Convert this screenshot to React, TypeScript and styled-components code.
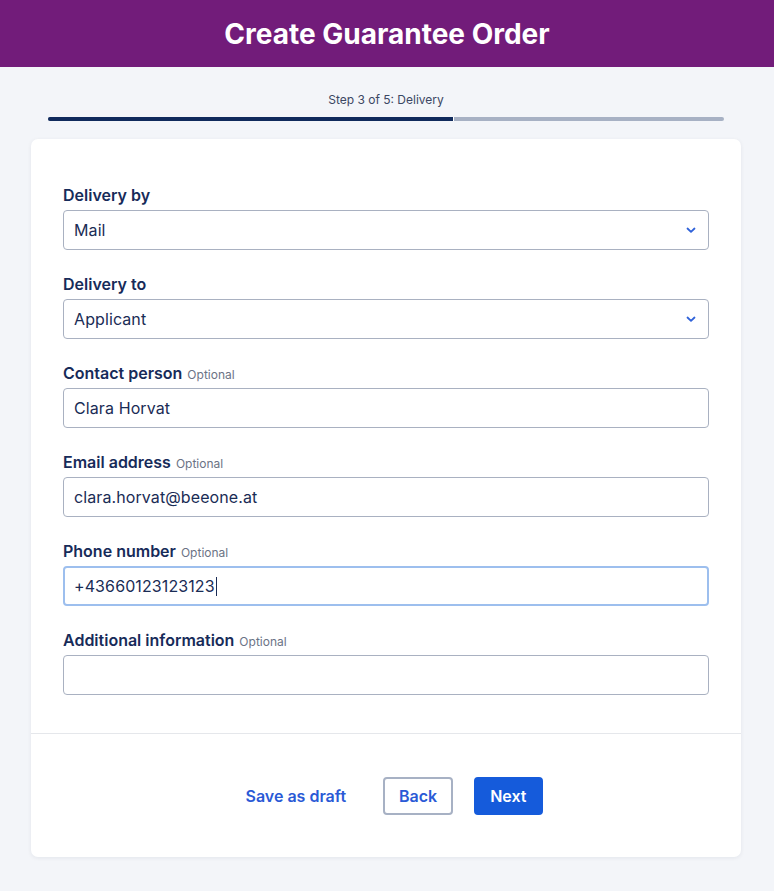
import React from "react";
import styled, { createGlobalStyle } from "styled-components";

const GlobalStyle = createGlobalStyle`
  * { box-sizing: border-box; }
  body {
    margin: 0;
    background: #f3f5f9;
    font-family: Inter, "Noto Sans", "Liberation Sans", sans-serif;
    color: #172b59;
  }
`;

const Header = styled.header`
  height: 67px;
  background: #721c7a;
  display: flex;
  align-items: center;
  justify-content: center;
`;

const Title = styled.h1`
  margin: 0;
  color: #ffffff;
  font-size: 28px;
  font-weight: 700;
  letter-spacing: 0;
`;

const Main = styled.main`
  padding: 25px 33px 34px 31px;
`;

const StepText = styled.div`
  text-align: center;
  font-size: 12px;
  line-height: 16px;
  color: #3b4763;
`;

const Progress = styled.div`
  margin: 9px 17px 18px;
  height: 4px;
  border-radius: 2px;
  background: #a7b1c4;
  display: flex;
  overflow: hidden;
`;

const ProgressFill = styled.div`
  height: 100%;
  background: #102a5c;
  border-right: 1px solid #ffffff;
`;

const Card = styled.section`
  background: #ffffff;
  border-radius: 7px;
  box-shadow: 0 1px 4px rgba(20, 30, 60, 0.07);
`;

const Form = styled.div`
  padding: 46px 32px 38px;
  display: flex;
  flex-direction: column;
  gap: 24px;
  border-bottom: 1px solid #e5e7eb;
`;

const Field = styled.div`
  display: flex;
  flex-direction: column;
  gap: 5px;
`;

const Label = styled.div`
  display: flex;
  align-items: baseline;
  height: 20px;
  font-size: 16px;
  line-height: 20px;
  font-weight: 600;
  color: #172b59;
`;

const Optional = styled.span`
  margin-left: 5px;
  font-size: 12px;
  line-height: 20px;
  font-weight: 400;
  color: #6b7385;
`;

const Box = styled.div<{ $focused?: boolean }>`
  height: 40px;
  border-radius: 4px;
  border: ${(p) => (p.$focused ? "2px solid #9dbfee" : "1px solid #a9b1c1")};
  padding: 0 ${(p) => (p.$focused ? "9px" : "10px")};
  display: flex;
  align-items: center;
  font-size: 16px;
  letter-spacing: 0.1px;
  color: #1a2c55;
  background: #ffffff;
`;

const Value = styled.span`
  flex: 1;
  display: flex;
  align-items: center;
`;

const Caret = styled.span`
  display: inline-block;
  width: 1px;
  height: 19px;
  background: #1a2c55;
  margin-left: 1px;
`;

const Chevron = styled.svg`
  width: 10px;
  height: 10px;
  margin-right: 2px;
`;

const Footer = styled.div`
  padding: 43px 0 42px;
  display: flex;
  justify-content: center;
  gap: 21px;
`;

const Button = styled.button<{ $variant: "link" | "outline" | "primary" }>`
  height: 38px;
  padding: 0 14px;
  border-radius: 4px;
  font-family: inherit;
  font-size: 16px;
  font-weight: 600;
  cursor: pointer;
  border: 2px solid
    ${(p) =>
      p.$variant === "outline" ? "#a7b1c4" : p.$variant === "primary" ? "#155bdb" : "transparent"};
  background: ${(p) => (p.$variant === "primary" ? "#155bdb" : "#ffffff")};
  color: ${(p) => (p.$variant === "primary" ? "#ffffff" : "#2a5ad6")};
`;

const ChevronIcon = () => (
  <Chevron viewBox="0 0 10 10">
    <polyline points="1.5,3.5 5,6.8 8.5,3.5" fill="none" stroke="#2f62d9" strokeWidth="1.8" strokeLinecap="round" strokeLinejoin="round" />
  </Chevron>
);

type FieldDef = { label: string; value: string; optional?: boolean; select?: boolean; focused?: boolean };

const fields: FieldDef[] = [
  { label: "Delivery by", value: "Mail", select: true },
  { label: "Delivery to", value: "Applicant", select: true },
  { label: "Contact person", value: "Clara Horvat", optional: true },
  { label: "Email address", value: "clara.horvat@beeone.at", optional: true },
  { label: "Phone number", value: "+43660123123123", optional: true, focused: true },
  { label: "Additional information", value: "", optional: true },
];

export default function App() {
  return (
    <>
      <GlobalStyle />
      <Header>
        <Title>Create Guarantee Order</Title>
      </Header>
      <Main>
        <StepText>Step 3 of 5: Delivery</StepText>
        <Progress>
          <ProgressFill style={{ width: `${(3 / 5) * 100}%` }} />
        </Progress>
        <Card>
          <Form>
            {fields.map((f) => (
              <Field key={f.label}>
                <Label>
                  {f.label}
                  {f.optional && <Optional>Optional</Optional>}
                </Label>
                <Box $focused={f.focused}>
                  <Value>
                    {f.value}
                    {f.focused && <Caret />}
                  </Value>
                  {f.select && <ChevronIcon />}
                </Box>
              </Field>
            ))}
          </Form>
          <Footer>
            <Button $variant="link">Save as draft</Button>
            <Button $variant="outline">Back</Button>
            <Button $variant="primary">Next</Button>
          </Footer>
        </Card>
      </Main>
    </>
  );
}
